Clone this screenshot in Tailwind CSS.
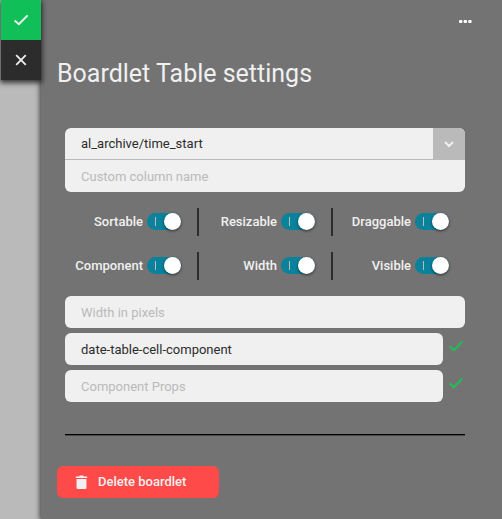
<!DOCTYPE html>
<html lang="en">
<head>
<meta charset="utf-8">
<meta name="viewport" content="width=device-width, initial-scale=1">
<title>Boardlet Table settings</title>
<script src="https://cdn.jsdelivr.net/npm/@tailwindcss/browser@4"></script>
</head>
<body class="flex min-h-screen bg-[#bababa] font-[Roboto,sans-serif] text-[13px] leading-5 font-medium text-[#f0f0f0]">
  <nav class="relative z-10 w-[41px] shrink-0 pl-px" aria-label="Settings actions">
    <div class="flex flex-col shadow-[0_2px_5px_1px_rgba(0,0,0,0.7)]">
      <button type="button" aria-label="Apply" class="flex h-10 items-center justify-center bg-[#10bf58]">
        <svg class="size-5" viewBox="0 0 20 20" fill="none" stroke="#f0f0f0" stroke-width="2"><path d="M3.600 10.600 7.900 14.200 16.600 5.400"/></svg>
      </button>
      <button type="button" aria-label="Close" class="flex h-10 items-center justify-center bg-[#2c2c2c]">
        <svg class="size-5" viewBox="0 0 20 20" fill="none" stroke="#f0f0f0" stroke-width="1.8"><path d="m5.200 5.200 9.600 9.600M14.800 5.200l-9.600 9.600"/></svg>
      </button>
    </div>
  </nav>

  <main class="min-w-0 flex-1 bg-[#737373] px-4 pb-5 shadow-[0_0_5px_1px_rgba(0,0,0,0.7)]">
    <div class="flex h-11 items-center justify-end pr-[14px] pb-[2px]">
      <button type="button" aria-label="More options" class="flex">
        <svg class="h-[3px] w-[13px]" viewBox="0 0 13 3" fill="#ffffff"><rect width="3.400" height="3" rx="1"/><rect x="4.600" width="3.400" height="3" rx="1"/><rect x="9.200" width="3.400" height="3" rx="1"/></svg>
      </button>
    </div>
    <h1 class="py-4 text-[25px] leading-7 font-normal">Boardlet Table settings</h1>

    <form class="mt-6">
      <div class="ml-2 mr-[21px]">
        <div class="overflow-hidden rounded-md bg-[#f0f0f0]">
          <div class="relative h-8 border-b border-[#bababa]">
            <select aria-label="Column" class="block h-full w-full appearance-none bg-transparent pr-10 pl-4 font-normal text-[#2c2c2c] outline-none">
              <option>al_archive/time_start</option>
            </select>
            <span class="pointer-events-none absolute inset-y-0 right-0 flex w-8 items-center justify-center bg-[#bababa]">
              <svg class="size-4" viewBox="0 0 16 16" fill="none" stroke="#f0f0f0" stroke-width="2"><path d="m4 6 4 4 4-4"/></svg>
            </span>
          </div>
          <input type="text" aria-label="Custom column name" placeholder="Custom column name" class="block h-8 w-full bg-transparent px-4 font-normal text-[#2c2c2c] outline-none placeholder:text-[#bababa]">
        </div>

        <div class="my-4 grid grid-cols-[134fr_134fr_132fr] gap-y-4">
          <label class="flex h-7 items-center justify-end gap-1 border-r-2 border-[#2c2c2c] pr-4">Sortable
            <span class="relative mb-px flex h-[17px] w-[34px] items-center">
              <input type="checkbox" role="switch" checked class="peer absolute inset-0 size-full appearance-none rounded-full bg-[#868686] checked:bg-[#0b829c]">
              <span class="pointer-events-none relative ml-2 h-[9px] w-px bg-[#bababa]"></span>
              <span class="pointer-events-none absolute left-0 size-[17px] rounded-full bg-white shadow-[0_1px_3px_rgba(0,0,0,0.6)] peer-checked:right-0 peer-checked:left-auto"></span>
            </span>
          </label>
          <label class="flex h-7 items-center justify-end gap-1 border-r-2 border-[#2c2c2c] pr-4">Resizable
            <span class="relative mb-px flex h-[17px] w-[34px] items-center">
              <input type="checkbox" role="switch" checked class="peer absolute inset-0 size-full appearance-none rounded-full bg-[#868686] checked:bg-[#0b829c]">
              <span class="pointer-events-none relative ml-2 h-[9px] w-px bg-[#bababa]"></span>
              <span class="pointer-events-none absolute left-0 size-[17px] rounded-full bg-white shadow-[0_1px_3px_rgba(0,0,0,0.6)] peer-checked:right-0 peer-checked:left-auto"></span>
            </span>
          </label>
          <label class="flex h-7 items-center justify-end gap-1 pr-4">Draggable
            <span class="relative mb-px flex h-[17px] w-[34px] items-center">
              <input type="checkbox" role="switch" checked class="peer absolute inset-0 size-full appearance-none rounded-full bg-[#868686] checked:bg-[#0b829c]">
              <span class="pointer-events-none relative ml-2 h-[9px] w-px bg-[#bababa]"></span>
              <span class="pointer-events-none absolute left-0 size-[17px] rounded-full bg-white shadow-[0_1px_3px_rgba(0,0,0,0.6)] peer-checked:right-0 peer-checked:left-auto"></span>
            </span>
          </label>
          <label class="flex h-7 items-center justify-end gap-1 border-r-2 border-[#2c2c2c] pr-4">Component
            <span class="relative mb-px flex h-[17px] w-[34px] items-center">
              <input type="checkbox" role="switch" checked class="peer absolute inset-0 size-full appearance-none rounded-full bg-[#868686] checked:bg-[#0b829c]">
              <span class="pointer-events-none relative ml-2 h-[9px] w-px bg-[#bababa]"></span>
              <span class="pointer-events-none absolute left-0 size-[17px] rounded-full bg-white shadow-[0_1px_3px_rgba(0,0,0,0.6)] peer-checked:right-0 peer-checked:left-auto"></span>
            </span>
          </label>
          <label class="flex h-7 items-center justify-end gap-1 border-r-2 border-[#2c2c2c] pr-4">Width
            <span class="relative mb-px flex h-[17px] w-[34px] items-center">
              <input type="checkbox" role="switch" checked class="peer absolute inset-0 size-full appearance-none rounded-full bg-[#868686] checked:bg-[#0b829c]">
              <span class="pointer-events-none relative ml-2 h-[9px] w-px bg-[#bababa]"></span>
              <span class="pointer-events-none absolute left-0 size-[17px] rounded-full bg-white shadow-[0_1px_3px_rgba(0,0,0,0.6)] peer-checked:right-0 peer-checked:left-auto"></span>
            </span>
          </label>
          <label class="flex h-7 items-center justify-end gap-1 pr-4">Visible
            <span class="relative mb-px flex h-[17px] w-[34px] items-center">
              <input type="checkbox" role="switch" checked class="peer absolute inset-0 size-full appearance-none rounded-full bg-[#868686] checked:bg-[#0b829c]">
              <span class="pointer-events-none relative ml-2 h-[9px] w-px bg-[#bababa]"></span>
              <span class="pointer-events-none absolute left-0 size-[17px] rounded-full bg-white shadow-[0_1px_3px_rgba(0,0,0,0.6)] peer-checked:right-0 peer-checked:left-auto"></span>
            </span>
          </label>
        </div>

        <div class="flex flex-col gap-[5px]">
          <input type="text" aria-label="Width in pixels" placeholder="Width in pixels" class="block h-8 w-full rounded-md bg-[#f0f0f0] px-4 font-normal text-[#2c2c2c] outline-none placeholder:text-[#bababa]">
          <div class="flex gap-1">
            <input type="text" aria-label="Component name" value="date-table-cell-component" class="block h-8 min-w-0 flex-1 rounded-md bg-[#f0f0f0] px-4 font-normal text-[#2c2c2c] outline-none">
            <button type="button" aria-label="Apply component name" class="flex w-[18px] justify-center pt-1">
              <svg class="size-[18px]" viewBox="0 0 18 18" fill="none" stroke="#20bd58" stroke-width="2"><path d="M2.600 9.200 6.900 13.300 15.400 4.400"/></svg>
            </button>
          </div>
          <div class="flex gap-1">
            <input type="text" aria-label="Component Props" placeholder="Component Props" class="block h-8 min-w-0 flex-1 rounded-md bg-[#f0f0f0] px-4 font-normal text-[#2c2c2c] outline-none placeholder:text-[#bababa]">
            <button type="button" aria-label="Apply component props" class="flex w-[18px] justify-center pt-1">
              <svg class="size-[18px]" viewBox="0 0 18 18" fill="none" stroke="#20bd58" stroke-width="2"><path d="M2.600 9.200 6.900 13.300 15.400 4.400"/></svg>
            </button>
          </div>
        </div>

        <hr class="mt-8 mb-[30px] h-[2px] border-t border-b border-t-black border-b-[#4a4a4a]">
      </div>

      <button type="button" class="flex h-8 w-[162px] items-center gap-2 rounded-md bg-[#ff4a4a] px-4">
        <svg class="size-[17px]" viewBox="0 0 24 24" fill="#f0f0f0"><path d="M5 7h14v12.500a1.800 1.800 0 0 1-1.800 1.800H6.800A1.800 1.800 0 0 1 5 19.500zM4 3.500h4.500l1-1.300h5l1 1.300H20v2H4z"/></svg>
        Delete boardlet
      </button>
    </form>
  </main>
</body>
</html>
